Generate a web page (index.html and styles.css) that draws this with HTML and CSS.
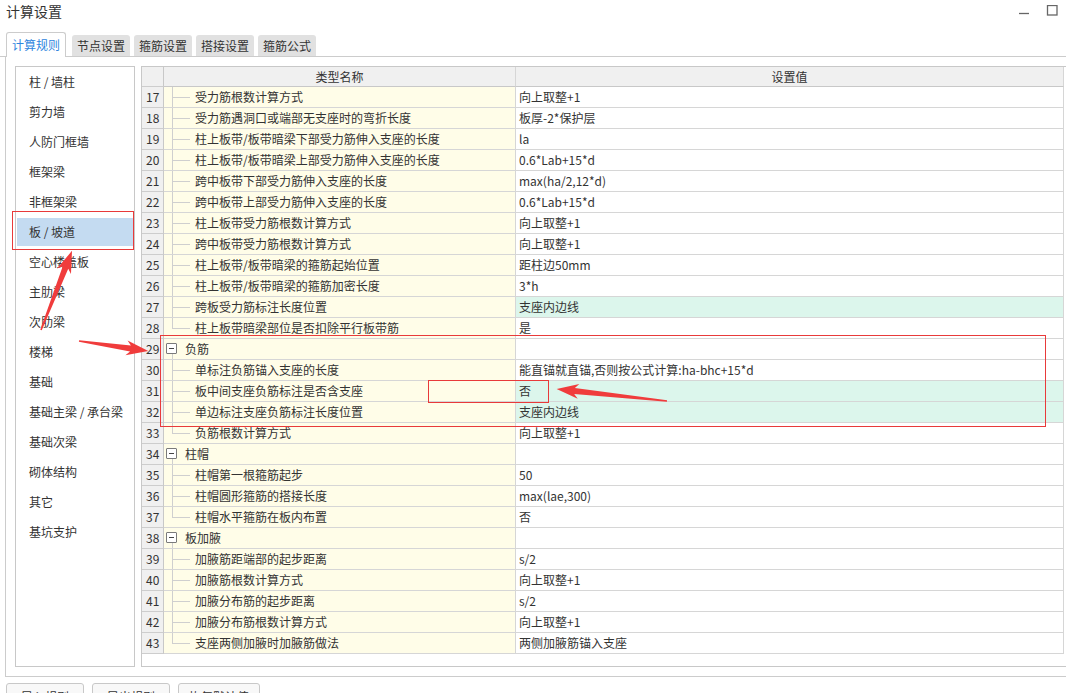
FILE: index.html
```html
<!DOCTYPE html>
<html lang="zh-CN">
<head>
<meta charset="utf-8">
<title>计算设置</title>
<link rel="stylesheet" href="styles.css">
</head>
<body>
<div class="window">
  <header class="titlebar">
    <span class="title">计算设置</span>
    <div class="controls">
      <svg class="ctl" width="12" height="12" viewBox="0 0 12 12"><line x1="1" y1="8.5" x2="11" y2="8.5" stroke="#666" stroke-width="1.3"/></svg>
      <svg class="ctl" width="12" height="12" viewBox="0 0 12 12"><rect x="1.5" y="0.5" width="9.5" height="9.5" fill="none" stroke="#666" stroke-width="1.3"/></svg>
    </div>
  </header>

  <nav class="tabs">
    <div class="tab active">计算规则</div>
    <div class="tab">节点设置</div>
    <div class="tab">箍筋设置</div>
    <div class="tab">搭接设置</div>
    <div class="tab">箍筋公式</div>
  </nav>

  <section class="panel">
    <ul class="sidebar">
      <li>柱 / 墙柱</li>
      <li>剪力墙</li>
      <li>人防门框墙</li>
      <li>框架梁</li>
      <li>非框架梁</li>
      <li class="selected">板 / 坡道</li>
      <li>空心楼盖板</li>
      <li>主肋梁</li>
      <li>次肋梁</li>
      <li>楼梯</li>
      <li>基础</li>
      <li>基础主梁 / 承台梁</li>
      <li>基础次梁</li>
      <li>砌体结构</li>
      <li>其它</li>
      <li>基坑支护</li>
    </ul>

    <div class="frame">
      <div class="grid">
        <div class="hd num"></div><div class="hd">类型名称</div><div class="hd">设置值</div>

        <div class="num">17</div><div class="name"><span class="br"></span><span>受力筋根数计算方式</span></div><div class="val">向上取整+1</div>
        <div class="num">18</div><div class="name"><span class="br"></span><span>受力筋遇洞口或端部无支座时的弯折长度</span></div><div class="val">板厚-2*保护层</div>
        <div class="num">19</div><div class="name"><span class="br"></span><span>柱上板带/板带暗梁下部受力筋伸入支座的长度</span></div><div class="val">la</div>
        <div class="num">20</div><div class="name"><span class="br"></span><span>柱上板带/板带暗梁上部受力筋伸入支座的长度</span></div><div class="val">0.6*Lab+15*d</div>
        <div class="num">21</div><div class="name"><span class="br"></span><span>跨中板带下部受力筋伸入支座的长度</span></div><div class="val">max(ha/2,12*d)</div>
        <div class="num">22</div><div class="name"><span class="br"></span><span>跨中板带上部受力筋伸入支座的长度</span></div><div class="val">0.6*Lab+15*d</div>
        <div class="num">23</div><div class="name"><span class="br"></span><span>柱上板带受力筋根数计算方式</span></div><div class="val">向上取整+1</div>
        <div class="num">24</div><div class="name"><span class="br"></span><span>跨中板带受力筋根数计算方式</span></div><div class="val">向上取整+1</div>
        <div class="num">25</div><div class="name"><span class="br"></span><span>柱上板带/板带暗梁的箍筋起始位置</span></div><div class="val">距柱边50mm</div>
        <div class="num">26</div><div class="name"><span class="br"></span><span>柱上板带/板带暗梁的箍筋加密长度</span></div><div class="val">3*h</div>
        <div class="num">27</div><div class="name"><span class="br"></span><span>跨板受力筋标注长度位置</span></div><div class="val hl">支座内边线</div>
        <div class="num">28</div><div class="name"><span class="br last"></span><span>柱上板带暗梁部位是否扣除平行板带筋</span></div><div class="val">是</div>

        <div class="num">29</div><div class="name group"><span class="toggle"></span><span>负筋</span></div><div class="val"></div>
        <div class="num">30</div><div class="name"><span class="br"></span><span>单标注负筋锚入支座的长度</span></div><div class="val">能直锚就直锚,否则按公式计算:ha-bhc+15*d</div>
        <div class="num">31</div><div class="name"><span class="br"></span><span>板中间支座负筋标注是否含支座</span></div><div class="val hl">否</div>
        <div class="num">32</div><div class="name"><span class="br"></span><span>单边标注支座负筋标注长度位置</span></div><div class="val hl">支座内边线</div>
        <div class="num">33</div><div class="name"><span class="br last"></span><span>负筋根数计算方式</span></div><div class="val">向上取整+1</div>

        <div class="num">34</div><div class="name group"><span class="toggle"></span><span>柱帽</span></div><div class="val"></div>
        <div class="num">35</div><div class="name"><span class="br"></span><span>柱帽第一根箍筋起步</span></div><div class="val">50</div>
        <div class="num">36</div><div class="name"><span class="br"></span><span>柱帽圆形箍筋的搭接长度</span></div><div class="val">max(lae,300)</div>
        <div class="num">37</div><div class="name"><span class="br last"></span><span>柱帽水平箍筋在板内布置</span></div><div class="val">否</div>

        <div class="num">38</div><div class="name group"><span class="toggle"></span><span>板加腋</span></div><div class="val"></div>
        <div class="num">39</div><div class="name"><span class="br"></span><span>加腋筋距端部的起步距离</span></div><div class="val">s/2</div>
        <div class="num">40</div><div class="name"><span class="br"></span><span>加腋筋根数计算方式</span></div><div class="val">向上取整+1</div>
        <div class="num">41</div><div class="name"><span class="br"></span><span>加腋分布筋的起步距离</span></div><div class="val">s/2</div>
        <div class="num">42</div><div class="name"><span class="br"></span><span>加腋分布筋根数计算方式</span></div><div class="val">向上取整+1</div>
        <div class="num">43</div><div class="name"><span class="br last"></span><span>支座两侧加腋时加腋筋做法</span></div><div class="val">两侧加腋筋锚入支座</div>
      </div>
    </div>
  </section>

  <footer class="buttons">
    <button class="btn">导入规则</button>
    <button class="btn">导出规则</button>
    <button class="btn">恢复默认值</button>
  </footer>
</div>

<svg class="annot" width="1066" height="693" viewBox="0 0 1066 693">
  <g fill="none" stroke="#e83a3a" stroke-width="1">
    <rect x="12.5" y="211.5" width="121" height="38"/>
    <rect x="160.5" y="335.5" width="885" height="91"/>
    <rect x="428.5" y="380.5" width="120" height="22"/>
  </g>
  <g fill="#f03c3c">
    <polygon transform="translate(41 330) rotate(-68.6)" points="0,-0.8 67,-3 63,-7.5 85,0 63,7.5 67,3 0,0.8"/>
    <polygon transform="translate(79 341) rotate(8.25)" points="0,-0.8 52,-3 48,-7.5 70,0 48,7.5 52,3 0,0.8"/>
    <polygon transform="translate(667 401) rotate(186.2)" points="0,-0.8 93,-3 89,-7.5 111,0 89,7.5 93,3 0,0.8"/>
  </g>
</svg>
</body>
</html>
```

FILE: styles.css
```css
html, body {
  margin: 0;
  padding: 0;
  background: #ffffff;
}
body {
  position: relative;
  width: 1066px;
  height: 693px;
  overflow: hidden;
  font-family: "Noto Sans CJK SC", "Noto Sans", sans-serif;
  font-size: 12px;
  color: #333333;
}
.window {
  width: 1066px;
}

/* title bar */
.titlebar {
  height: 32px;
  display: flex;
  justify-content: space-between;
  align-items: flex-start;
}
.title {
  padding-left: 6px;
  font-size: 14px;
  line-height: 22px;
  color: #333;
}
.controls {
  display: flex;
  gap: 16px;
  padding-top: 5px;
  padding-right: 8px;
}
.ctl {
  display: block;
}

/* tabs */
.tabs {
  height: 24px;
  display: flex;
  align-items: flex-end;
  padding-left: 6px;
  border-bottom: 1px solid #cccccc;
}
.tab {
  box-sizing: border-box;
  width: 58px;
  height: 21px;
  line-height: 21px;
  text-align: center;
  background: #e1e1e1;
  border-radius: 3px 3px 0 0;
  color: #333;
  margin-left: 4px;
}
.tab.active {
  width: 60px;
  height: 25px;
  line-height: 23px;
  margin-left: 0;
  margin-right: 2px;
  margin-bottom: -1px;
  background: #ffffff;
  border: 1px solid #cccccc;
  border-bottom: none;
  color: #2f86de;
}

/* panel */
.panel {
  box-sizing: border-box;
  margin-left: 5px;
  height: 620px;
  display: flex;
  align-items: stretch;
  padding: 9px 0 9px 9px;
  border-left: 1px solid #cccccc;
  border-bottom: 1px solid #cccccc;
}
.sidebar {
  box-sizing: border-box;
  flex: none;
  width: 120px;
  margin: 0;
  padding: 1px 0 0 1px;
  list-style: none;
  border: 1px solid #c8c8c8;
}
.sidebar li {
  height: 28px;
  line-height: 28px;
  margin-bottom: 2px;
  margin-right: 1px;
  padding-left: 12px;
  white-space: nowrap;
}
.sidebar li.selected {
  background: #c4dbf1;
}

.frame {
  box-sizing: border-box;
  flex: none;
  width: 960px;
  margin-left: 6px;
  border: 1px solid #c8c8c8;
  border-right: none;
}
.grid {
  display: grid;
  grid-template-columns: 22px 352px 548px;
  grid-template-rows: 20px;
  grid-auto-rows: 21px;
}
.grid > div {
  box-sizing: border-box;
  border-right: 1px solid #d6d6d6;
  border-bottom: 1px solid #d6d6d6;
  line-height: 20px;
  white-space: nowrap;
  overflow: hidden;
}
.hd {
  background: #f0f0f0;
  text-align: center;
  line-height: 19px;
}
.grid > .hd {
  border-bottom-color: #c8c8c8;
  line-height: 19px;
}
.grid > .num {
  background: #f0f0f0;
  padding-left: 4px;
  border-right-color: #c8c8c8;
  border-bottom-color: #cdcdcd;
}
.name {
  display: flex;
  align-items: stretch;
  background: #fffde8;
}
.br {
  flex: none;
  width: 18px;
  margin-left: 8px;
  margin-right: 5px;
  background:
    linear-gradient(#cfcfcf, #cfcfcf) 0 0 / 1px 100% no-repeat,
    linear-gradient(#cfcfcf, #cfcfcf) 0 10px / 100% 1px no-repeat;
}
.br.last {
  background:
    linear-gradient(#cfcfcf, #cfcfcf) 0 0 / 1px 11px no-repeat,
    linear-gradient(#cfcfcf, #cfcfcf) 0 10px / 100% 1px no-repeat;
}
.name.group {
  background:
    linear-gradient(#cfcfcf, #cfcfcf) 8px 15px / 1px 6px no-repeat,
    #fffde8;
}
.toggle {
  box-sizing: border-box;
  flex: none;
  align-self: flex-start;
  position: relative;
  width: 11px;
  height: 11px;
  margin-top: 4px;
  margin-left: 2px;
  margin-right: 8px;
  border: 1px solid #7a7a7a;
  border-radius: 1px;
  background: #ffffff;
}
.toggle::before {
  content: "";
  position: absolute;
  left: 2px;
  top: 4px;
  width: 5px;
  height: 1px;
  background: #444;
}
.val {
  padding-left: 3px;
  background: #ffffff;
}
.val.hl {
  background: #dcf6ec;
}

/* bottom buttons */
.buttons {
  display: flex;
  gap: 8px;
  margin-top: 6px;
  padding-left: 6px;
}
.btn {
  box-sizing: border-box;
  min-width: 78px;
  height: 26px;
  padding: 0 10px;
  font-family: "Noto Sans CJK SC", "Noto Sans", sans-serif;
  font-size: 12px;
  color: #333;
  background: #f8f8f8;
  border: 1px solid #c8c8c8;
  border-radius: 3px;
}

/* annotation overlay */
.annot {
  position: absolute;
  left: 0;
  top: 0;
  pointer-events: none;
}
```
